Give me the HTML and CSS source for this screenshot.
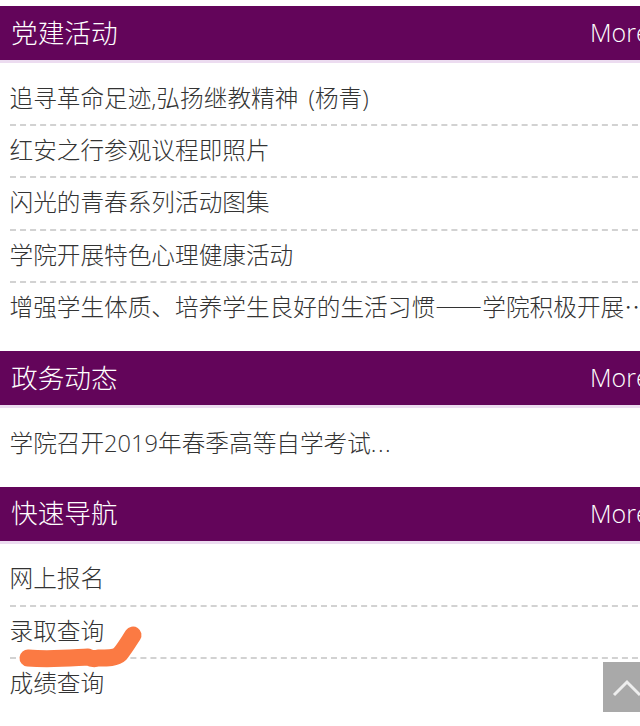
FILE: index.html
```html
<!DOCTYPE html>
<html lang="zh-CN">
<head>
<meta charset="utf-8">
<title>学院</title>
<link rel="stylesheet" href="styles.css">
</head>
<body>
<section class="panel">
  <header class="panel-head"><h2>党建活动</h2><a class="more">More</a></header>
  <ul class="list">
    <li>追寻革命足迹<span class="latin">,</span>弘扬继教精神 <span class="latin">(</span>杨青<span class="latin">)</span></li>
    <li>红安之行参观议程即照片</li>
    <li>闪光的青春系列活动图集</li>
    <li>学院开展特色心理健康活动</li>
    <li>增强学生体质、培养学生良好的生活习惯——学院积极开展学生体育活动</li>
  </ul>
</section>
<section class="panel">
  <header class="panel-head"><h2>政务动态</h2><a class="more">More</a></header>
  <ul class="list">
    <li>学院召开<span class="latin">2019</span>年春季高等自学考试<span class="latin dots">...</span></li>
  </ul>
</section>
<section class="panel">
  <header class="panel-head"><h2>快速导航</h2><a class="more">More</a></header>
  <ul class="list">
    <li>网上报名</li>
    <li>录取查询</li>
    <li>成绩查询</li>
  </ul>
</section>
<svg class="scribble" viewBox="0 0 640 726" aria-hidden="true">
  <path d="M28 658 C50 660 70 658 88 657 C92 659 95 659 98 658 C108 658 116 658 120 654 C125 648 129 641 133 635"/>
</svg>
<a class="to-top" aria-label="top">
  <svg viewBox="0 0 37 50"><path d="M11 33 L24 20 L37 33"/></svg>
</a>
</body>
</html>
```
FILE: styles.css
```css
html, body {
  margin: 0;
  height: 726px;
  overflow: hidden;
  background: #fff;
}
body {
  padding-top: 6px;
  box-sizing: border-box;
  position: relative;
  font-family: "Open Sans", "Noto Sans CJK SC", sans-serif;
}
.panel {
  margin-bottom: 15.6px;
}
.panel-head {
  height: 54px;
  box-sizing: content-box;
  background: #63055a;
  border-bottom: 3px solid #ecdcf0;
  display: flex;
  align-items: center;
  justify-content: space-between;
  padding-left: 11px;
  overflow: hidden;
  color: #fff;
}
.panel-head h2 {
  margin: 0 0 4px;
  font-size: 26.7px;
  font-weight: 300;
  font-family: "Noto Sans CJK SC", sans-serif;
}
.more {
  font-size: 25px;
  font-weight: 300;
  width: 50px;
  margin-bottom: 2px;
  white-space: nowrap;
}
.list {
  list-style: none;
  margin: 0 -8px 0 0;
  padding: 10.6px 0 0 9.5px;
}
.list li {
  height: 52.4px;
  line-height: 47px;
  box-sizing: border-box;
  border-bottom: 2px dashed #d2d2d2;
  font-size: 23.65px;
  word-spacing: 5px;
  font-family: "Noto Sans CJK SC", sans-serif;
  font-weight: 300;
  color: #333;
  white-space: nowrap;
  overflow: hidden;
  text-overflow: ellipsis;
}
.list li:last-child {
  border-bottom: 0;
}
.latin {
  font-family: "Open Sans", sans-serif;
  font-weight: 300;
}
.dots {
  letter-spacing: 1.5px;
}
.scribble {
  position: absolute;
  left: 0;
  top: 0;
  width: 640px;
  height: 726px;
  pointer-events: none;
}
.scribble path {
  fill: none;
  stroke: #fb7a43;
  stroke-width: 17px;
  stroke-linecap: round;
  stroke-linejoin: round;
}
.to-top {
  position: absolute;
  left: 603px;
  top: 662px;
  width: 37px;
  height: 50px;
  background: #a9a9a9;
}
.to-top svg {
  display: block;
  width: 37px;
  height: 50px;
}
.to-top path {
  fill: none;
  stroke: #eee;
  stroke-width: 3px;
}
```
